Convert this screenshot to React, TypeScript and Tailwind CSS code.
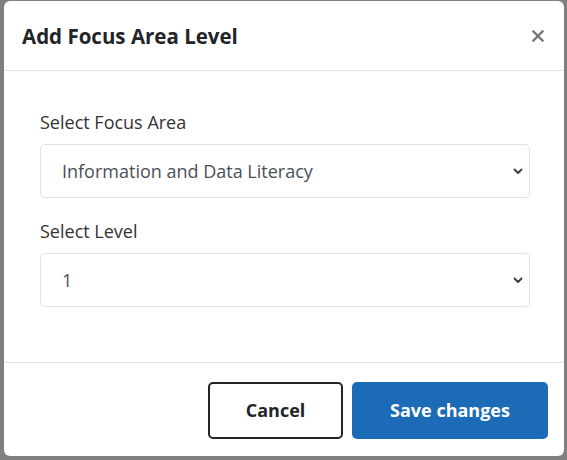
import { useState } from 'react';

const AREAS = [
  'Information and Data Literacy',
  'Communication and Collaboration',
  'Digital Content Creation',
  'Safety',
  'Problem Solving',
];

const LEVELS = ['1', '2', '3', '4', '5', '6', '7', '8'];

function Chevron() {
  return (
    <svg
      className="pointer-events-none absolute right-[7px] top-1/2 -translate-y-1/2"
      width="10"
      height="8"
      viewBox="0 0 10 8"
      fill="none"
    >
      <path d="M1.5 2.5 5 6l3.5-3.5" stroke="#343a40" strokeWidth="1.8" strokeLinecap="round" strokeLinejoin="round" />
    </svg>
  );
}

function Field({
  label,
  value,
  options,
  onChange,
  className,
}: {
  label: string;
  value: string;
  options: string[];
  onChange: (v: string) => void;
  className?: string;
}) {
  return (
    <div className={className}>
      <label className="block text-[18px] leading-[25px] text-[#333] mb-[9px]">{label}</label>
      <div className="relative">
        <select
          value={value}
          onChange={(e) => onChange(e.target.value)}
          className="w-full h-[54px] appearance-none bg-white border border-[#dee2e6] rounded-[5px] pl-[21px] pr-10 text-[18px] text-[#495057] outline-none"
        >
          {options.map((o) => (
            <option key={o} value={o}>
              {o}
            </option>
          ))}
        </select>
        <Chevron />
      </div>
    </div>
  );
}

export default function App() {
  const [area, setArea] = useState(AREAS[0]);
  const [level, setLevel] = useState(LEVELS[0]);

  return (
    <div
      className="w-[567px] h-[460px] bg-[#7f7f7f] pt-[1px] pl-[4px]"
      style={{ fontFamily: '"Open Sans", "Liberation Sans", sans-serif' }}
    >
      <div className="w-[560px] h-[455px] bg-white rounded-[6px] flex flex-col">
        <div className="h-[70px] flex items-center justify-between pl-[18px] pr-[20px] border-b border-[#dee2e6]">
          <h3 className="text-[20.5px] font-bold text-[#212529] pt-[1px]">Add Focus Area Level</h3>
          <button type="button" className="text-[#6c757d]" aria-label="Close">
            <svg width="12" height="12" viewBox="0 0 12 12">
              <path d="M1.5 1.5l9 9M10.5 1.5l-9 9" stroke="#777" strokeWidth="2.4" strokeLinecap="square" />
            </svg>
          </button>
        </div>

        <div className="flex-1 pl-[36px] pr-[34px] pt-[39px] border-b border-[#dee2e6]">
          <Field label="Select Focus Area" value={area} options={AREAS} onChange={setArea} />
          <Field label="Select Level" value={level} options={LEVELS} onChange={setLevel} className="mt-[21px]" />
        </div>

        <div className="flex justify-end gap-[9px] pt-[19px] pb-[17px] pr-[16px]">
          <button
            type="button"
            className="w-[135px] h-[57px] rounded-[5px] border-2 border-[#212529] bg-white text-[18px] font-bold text-[#212529]"
          >
            Cancel
          </button>
          <button
            type="button"
            className="w-[196px] h-[57px] rounded-[5px] bg-[#1b6bb6] text-[18px] font-bold text-white"
          >
            Save changes
          </button>
        </div>
      </div>
    </div>
  );
}
